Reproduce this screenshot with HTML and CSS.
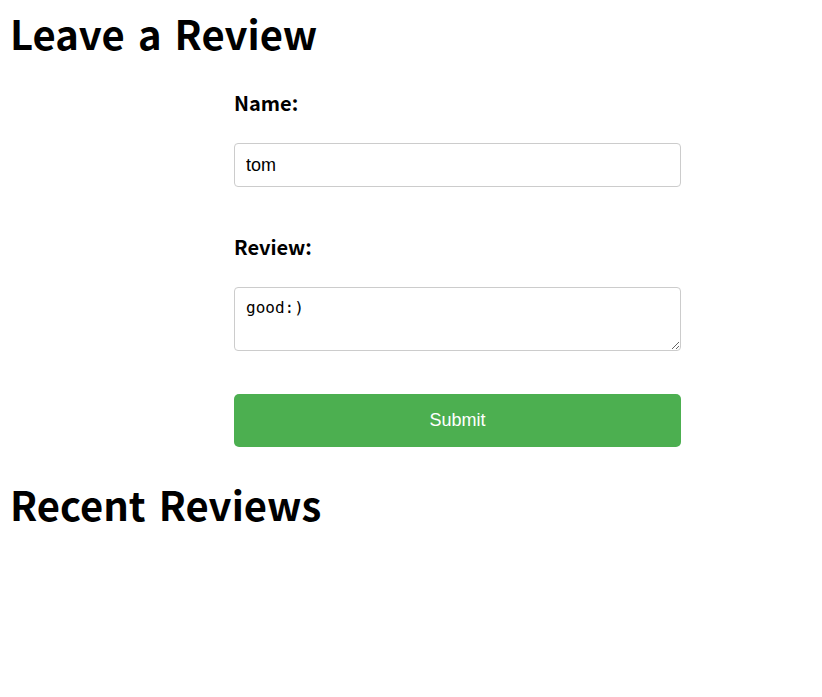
FILE: index.html
```html
<!DOCTYPE html>
<html lang="en">
<head>
  <meta charset="UTF-8">
  <meta name="viewport" content="width=device-width, initial-scale=1.0">
  <title>Reviews</title>
  <link rel="stylesheet" href="styles.css">
</head>
<body>
  <h1>Leave a Review</h1>

  <form class="review-form" id="reviewForm">
    <div class="field">
      <label for="name">Name:</label>
      <input type="text" id="name" value="tom">
    </div>
    <div class="field">
      <label for="review">Review:</label>
      <textarea id="review">good:)</textarea>
    </div>
    <button type="submit" class="submit-btn">Submit</button>
  </form>

  <h1>Recent Reviews</h1>
  <div class="reviews" id="reviews">
    
  </div>
</body>
</html>
```

FILE: styles.css
```css
body {
  font-family: "Noto Sans CJK KR", "Noto Sans", sans-serif;
  margin: 0;
  padding: 0 10px;
  background-color: white;
  color: black;
}
h1 {
  font-size: 40px;
  font-weight: bold;
  line-height: 1.2;
  margin: 9px 0 0;
  word-spacing: 4px;
}
.review-form {
  margin: 30px 0 33px 224px;
  width: 447px;
}
.field {
  margin-bottom: 44px;
}
.field:last-of-type {
  margin-bottom: 43px;
}
.field label {
  display: block;
  font-size: 20px;
  font-weight: bold;
  line-height: 32px;
  margin-bottom: 24px;
}
.field input,
.field textarea {
  display: block;
  box-sizing: border-box;
  width: 100%;
  border: 1px solid #ccc;
  border-radius: 4px;
  padding: 0 11px;
  margin: 0;
}
.field input {
  height: 44px;
  font-family: "Liberation Sans", Arial, sans-serif;
  font-size: 18px;
}
.field textarea {
  height: 64px;
  padding-top: 10px;
  font-family: "DejaVu Sans Mono", monospace;
  font-size: 16px;
  resize: vertical;
}
.submit-btn {
  display: block;
  width: 100%;
  height: 53px;
  border: none;
  border-radius: 5px;
  background-color: #4caf50;
  color: white;
  font-family: "Liberation Sans", Arial, sans-serif;
  font-size: 18px;
  margin: 0;
}
```
